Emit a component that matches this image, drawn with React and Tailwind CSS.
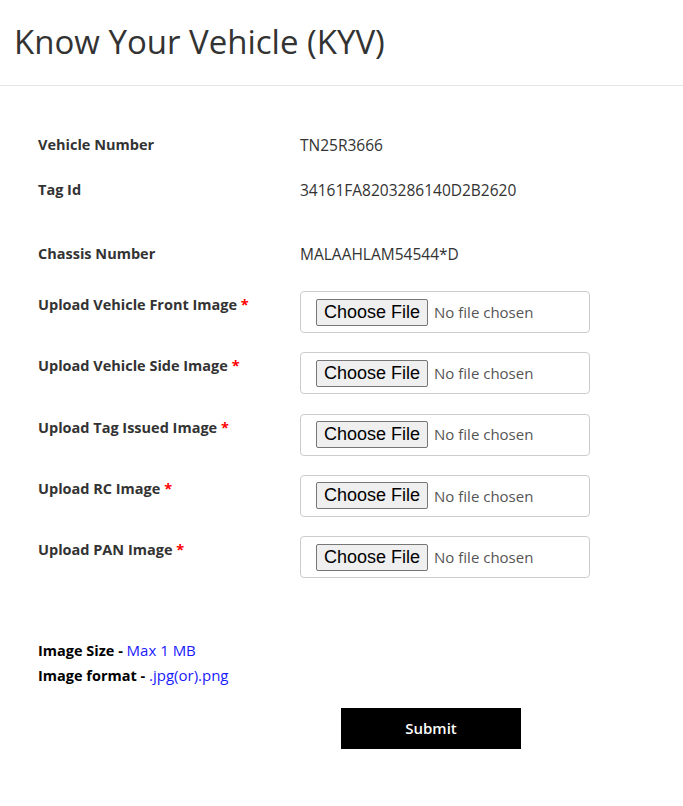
import React from 'react';

const uploads = [
  'Upload Vehicle Front Image',
  'Upload Vehicle Side Image',
  'Upload Tag Issued Image',
  'Upload RC Image',
  'Upload PAN Image',
];

function FileBox() {
  return (
    <div className="w-[290px] h-[42px] border border-[#cccccc] rounded-[4px] flex items-center pl-[15px]">
      <span className="h-[27px] px-[7px] flex items-center bg-[#efefef] border border-[#767676] rounded-[2px] text-[18px] text-black font-['Liberation_Sans',Arial,sans-serif]">
        Choose File
      </span>
      <span className="ml-[6px] text-[15px] text-[#555555]">No file chosen</span>
    </div>
  );
}

export default function App() {
  return (
    <div className="min-h-screen bg-white text-[#333333] font-['Open_Sans',sans-serif]">
      <header className="h-[86px] flex items-center px-[14px] border-b border-[#e5e5e5]">
        <h1 className="text-[33px] leading-[40px] pb-[2px]">Know Your Vehicle (KYV)</h1>
      </header>

      <main className="px-[38px] pt-[48px] text-[15.5px]">
        <div className="flex leading-[22px]">
          <div className="w-[262px] font-bold text-[14.5px]">Vehicle Number</div>
          <div>TN25R3666</div>
        </div>
        <div className="flex leading-[22px] mt-[23px]">
          <div className="w-[262px] font-bold text-[14.5px]">Tag Id</div>
          <div>34161FA8203286140D2B2620</div>
        </div>
        <div className="flex leading-[22px] mt-[42px]">
          <div className="w-[262px] font-bold text-[14.5px]">Chassis Number</div>
          <div>MALAAHLAM54544*D</div>
        </div>

        <div className="mt-[26px] flex flex-col gap-[19.25px]">
          {uploads.map((u) => (
            <div key={u} className="flex">
              <div className="w-[262px] font-bold text-[14.5px] leading-[22px] pt-[3px]">
                {u} <span className="text-[#ff0000]">*</span>
              </div>
              <FileBox />
            </div>
          ))}
        </div>

        <div className="mt-[60px] text-black text-[15px]">
          <div className="h-[25px] flex items-center">
            <span className="font-bold text-[14.5px] whitespace-pre">Image Size - </span>
            <span className="text-[#1a1aff]">Max 1 MB</span>
          </div>
          <div className="h-[25px] flex items-center">
            <span className="font-bold text-[14.5px] whitespace-pre">Image format - </span>
            <span className="text-[#1a1aff]">.jpg(or).png</span>
          </div>
        </div>

        <button className="block mt-[20px] ml-[303px] w-[180px] h-[41px] bg-black text-white font-semibold text-[15px]">
          Submit
        </button>
      </main>
    </div>
  );
}
